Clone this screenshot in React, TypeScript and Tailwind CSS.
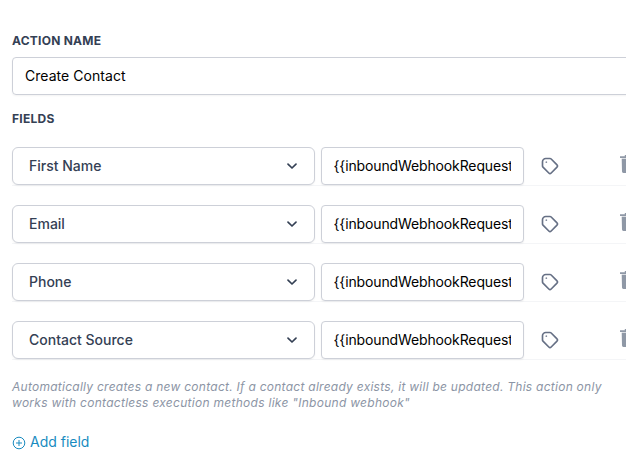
const rows = ['First Name', 'Email', 'Phone', 'Contact Source'];

function TagIcon() {
  return (
    <svg className="h-5 w-5 shrink-0" viewBox="0 0 24 24" fill="none" stroke="#667085" strokeWidth="2" strokeLinecap="round" strokeLinejoin="round">
      <path d="M7 3h5c.512 0 1.024.195 1.414.586l7 7a2 2 0 010 2.828l-7 7a2 2 0 01-2.828 0l-7-7A1.994 1.994 0 013 12V7a4 4 0 014-4z" />
      <path d="M7.6 7.4h.01" strokeWidth="2" strokeOpacity="0.8" />
    </svg>
  );
}

function TrashIcon() {
  return (
    <svg className="h-[19px] w-4 shrink-0" viewBox="0 0 16 19" fill="#8f98a6">
      <path d="M0 1.2h4.8V0h6.4v1.2H16V3H0z" />
      <path fillOpacity="0.35" d="M1.7 3h12.6v1H1.7z" />
      <path d="M1.7 4h12.6v12.6a1.4 1.4 0 0 1-1.4 1.4H3.4A1.4 1.4 0 0 1 2 16.6z" />
    </svg>
  );
}

function FieldRow({ label }: { label: string }) {
  return (
    <div className="flex h-[39px] items-start border-b border-[#f4f5f7]">
      <div className="flex h-[38px] w-[303px] shrink-0 items-center justify-between rounded-md border border-[#cdd0d8] bg-white pr-4 pl-4 shadow-xs">
        <span className="text-[14px] leading-5 font-medium text-[#344054]">{label}</span>
        <svg className="h-3 w-3" viewBox="0 0 12 12" fill="none" stroke="#344054" strokeWidth="1.7" strokeLinecap="round" strokeLinejoin="round">
          <path d="M2 4.2l4 3.8 4-3.8" />
        </svg>
      </div>
      <div className="ml-[6px] flex h-[38px] w-[203px] shrink-0 items-center rounded border border-[#cdd0d8] bg-white pr-3 pl-[11.5px] shadow-xs">
        <span className="overflow-hidden text-[14px] leading-5 tracking-[-0.13px] whitespace-nowrap text-black">{'{{inboundWebhookRequest.firstName}}'}</span>
      </div>
      <div className="mt-[9px] ml-4">
        <TagIcon />
      </div>
      <div className="mt-[8px] ml-[60px]">
        <TrashIcon />
      </div>
    </div>
  );
}

export default function App() {
  return (
    <div className="h-[470px] w-[626px] overflow-hidden bg-white pl-3 font-[Inter,sans-serif]">
      <div className="pt-[33px] text-[12px] leading-4 font-bold tracking-[0.25px] text-[#344054]">ACTION NAME</div>
      <div className="mt-2 flex h-[38px] w-[640px] items-center rounded border border-[#cdd0d8] px-3 text-[14px] leading-5 tracking-[0.05px] text-black shadow-xs">
        Create Contact
      </div>
      <div className="mt-4 text-[12px] leading-4 font-bold tracking-[0.25px] text-[#344054]">FIELDS</div>
      <div className="mt-5 flex w-[640px] flex-col gap-[19px]">
        {rows.map((label) => (
          <FieldRow key={label} label={label} />
        ))}
      </div>
      <p className="mt-[19px] text-[12px] leading-4 tracking-[0.26px] whitespace-nowrap text-[#8c95a5] italic">
        Automatically creates a new contact. If a contact already exists, it will be updated. This action only
        <br />
        <span className="tracking-[0.28px]">works with contactless execution methods like "Inbound webhook"</span>
      </p>
      <div className="mt-[21px] flex items-center text-[14px] leading-5 text-[#188bc0]">
        <svg className="mt-px mr-1 h-[14px] w-[14px]" viewBox="0 0 14 14" fill="none" stroke="currentColor" strokeWidth="1">
          <circle cx="7" cy="7" r="5.8" />
          <path d="M7 4v6M4 7h6" />
        </svg>
        Add field
      </div>
    </div>
  );
}
